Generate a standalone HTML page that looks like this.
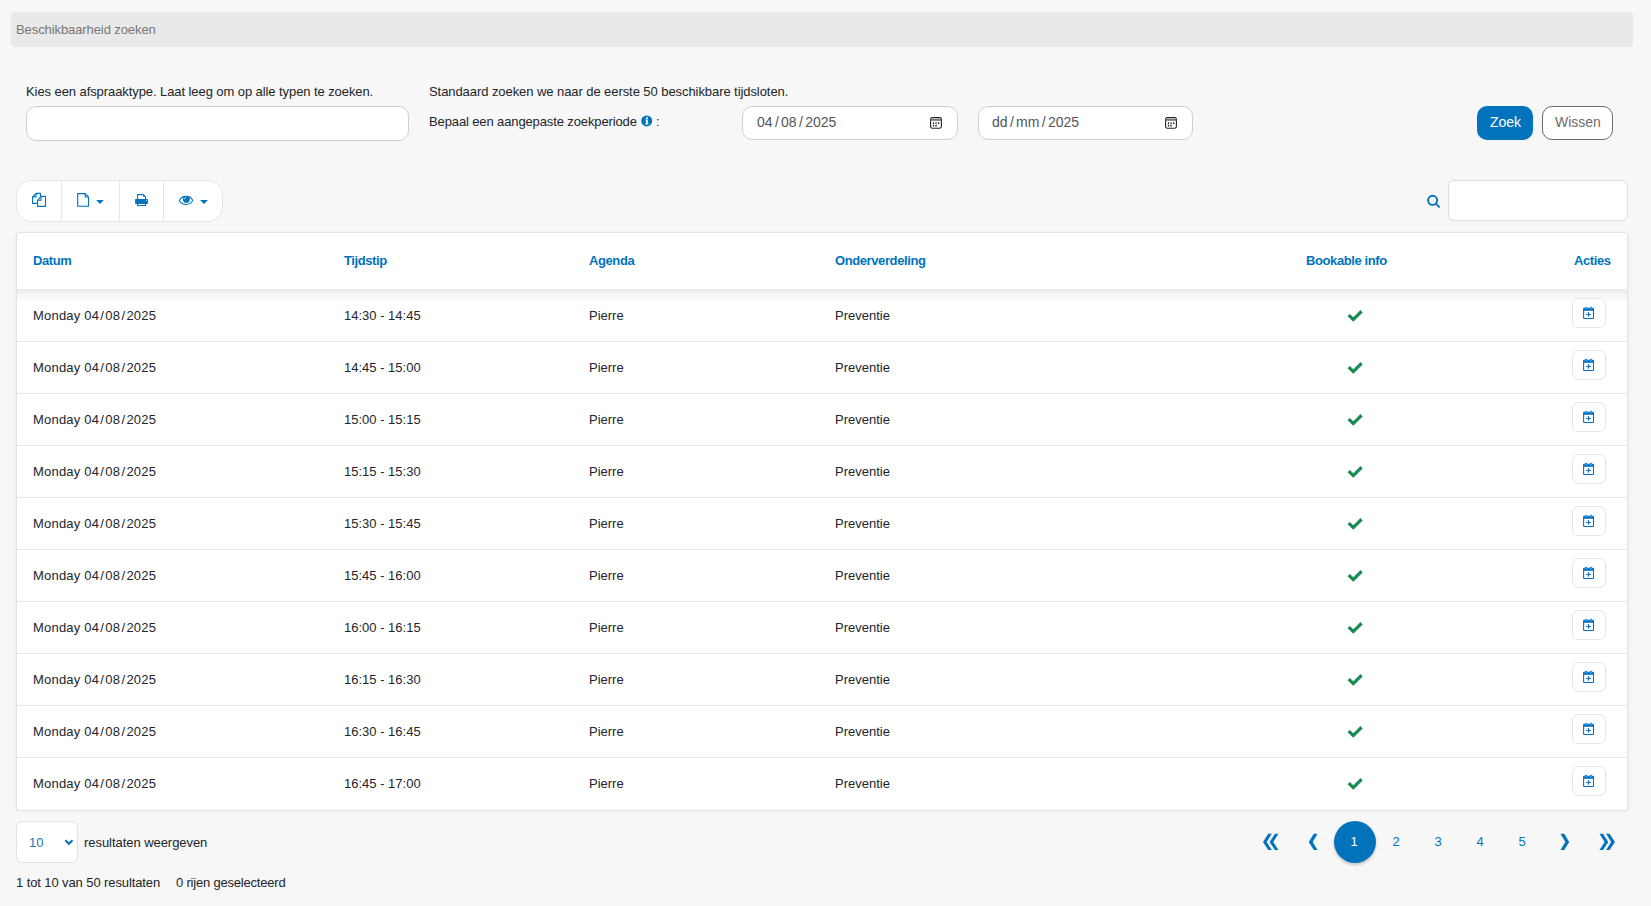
<!DOCTYPE html>
<html><head><meta charset="utf-8">
<style>
*{box-sizing:border-box;margin:0;padding:0}
html,body{width:1651px;height:906px;overflow:hidden;background:#f7f7f7;font-family:"Liberation Sans",sans-serif;font-size:13px;color:#212529}
.a{position:absolute;white-space:nowrap;line-height:16px}
.box{position:absolute;background:#fff}
.th{position:absolute;white-space:nowrap;line-height:16px;font-weight:bold;color:#0173bd;letter-spacing:-0.4px;top:253px}
.hl{position:absolute;left:17px;width:1610px;height:1px;background:#e6e6e6}
.ab{position:absolute;left:1572px;width:34px;height:30px;border:1px solid #e6e6e6;border-radius:6px;background:#fff}
.pg{position:absolute;top:834px;width:42px;text-align:center;line-height:16px;color:#0173bd;font-size:13px}
svg{position:absolute;display:block;overflow:visible}
</style></head><body>

<!-- header bar -->
<div class="box" style="left:11px;top:12px;width:1622px;height:35px;background:#e9e9e9;border-radius:4px"></div>
<div class="a" style="left:16px;top:22px;color:#777;letter-spacing:-0.09px">Beschikbaarheid zoeken</div>

<!-- form -->
<div class="a" style="left:26px;top:84px;letter-spacing:-0.08px">Kies een afspraaktype. Laat leeg om op alle typen te zoeken.</div>
<div class="box" style="left:26px;top:106px;width:383px;height:35px;border:1px solid #cfcfcf;border-radius:10px"></div>

<div class="a" style="left:429px;top:84px;letter-spacing:-0.07px">Standaard zoeken we naar de eerste 50 beschikbare tijdsloten.</div>
<div class="a" style="left:429px;top:114px;letter-spacing:-0.12px">Bepaal een aangepaste zoekperiode</div>
<svg style="left:640.8px;top:115.4px" width="12" height="12" viewBox="0 0 12 12">
<circle cx="5.7" cy="5.9" r="5.5" fill="#0173bd"/>
<circle cx="5.9" cy="2.9" r="1" fill="#fff"/>
<path d="M4.3 4.5 H6.8 V8.5 H7.6 V9.5 H4.2 V8.5 H5 V5.5 H4.3 Z" fill="#fff"/>
</svg>
<div class="a" style="left:656px;top:114px">:</div>

<div class="box" style="left:742px;top:106px;width:216px;height:34px;border:1px solid #cfcfcf;border-radius:10px"></div>
<div class="a" style="left:757px;top:114px;font-size:14px;color:#555">04<span style="margin:0 2.3px">/</span>08<span style="margin:0 2.3px">/</span>2025</div>
<svg style="left:926px;top:111px" width="20" height="24" viewBox="0 0 20 24">
<rect x="4.6" y="6.6" width="10.8" height="10.6" rx="1.6" fill="none" stroke="#222" stroke-width="1.1"/>
<rect x="4.6" y="7.9" width="10.8" height="1.9" fill="#777"/>
<rect x="6.8" y="11.2" width="1.3" height="1.8" rx=".5" fill="#222"/>
<rect x="9.1" y="11.2" width="1.8" height="1.8" rx=".5" fill="#666"/>
<rect x="11.9" y="11.2" width="1.4" height="1.8" rx=".5" fill="#222"/>
<rect x="6.8" y="13.8" width="1.3" height="1.6" rx=".5" fill="#222"/>
<rect x="9.1" y="13.8" width="1.8" height="1.6" rx=".5" fill="#444"/>
</svg>
<div class="box" style="left:978px;top:106px;width:215px;height:34px;border:1px solid #cfcfcf;border-radius:10px"></div>
<div class="a" style="left:992px;top:114px;font-size:14px;color:#555">dd<span style="margin:0 2.3px">/</span>mm<span style="margin:0 2.3px">/</span>2025</div>
<svg style="left:1161px;top:111px" width="20" height="24" viewBox="0 0 20 24">
<rect x="4.6" y="6.6" width="10.8" height="10.6" rx="1.6" fill="none" stroke="#222" stroke-width="1.1"/>
<rect x="4.6" y="7.9" width="10.8" height="1.9" fill="#777"/>
<rect x="6.8" y="11.2" width="1.3" height="1.8" rx=".5" fill="#222"/>
<rect x="9.1" y="11.2" width="1.8" height="1.8" rx=".5" fill="#666"/>
<rect x="11.9" y="11.2" width="1.4" height="1.8" rx=".5" fill="#222"/>
<rect x="6.8" y="13.8" width="1.3" height="1.6" rx=".5" fill="#222"/>
<rect x="9.1" y="13.8" width="1.8" height="1.6" rx=".5" fill="#444"/>
</svg>

<div class="box" style="left:1477px;top:106px;width:56px;height:34px;background:#0173bd;border-radius:10px"></div>
<div class="a" style="left:1490px;top:114px;font-size:14px;color:#fff">Zoek</div>
<div class="box" style="left:1542px;top:106px;width:71px;height:34px;border:1px solid #6c6c6c;border-radius:10px"></div>
<div class="a" style="left:1555px;top:114px;font-size:14px;color:#6c6c6c">Wissen</div>

<!-- toolbar -->
<div class="box" style="left:16px;top:180px;width:207px;height:42px;border:1px solid #e6e6e6;border-radius:15px"></div>
<div class="box" style="left:61px;top:181px;width:1px;height:40px;background:#e6e6e6"></div>
<div class="box" style="left:119px;top:181px;width:1px;height:40px;background:#e6e6e6"></div>
<div class="box" style="left:163px;top:181px;width:1px;height:40px;background:#e6e6e6"></div>
<svg style="left:28px;top:188px" width="24" height="24" viewBox="0 0 24 24" fill="none" stroke="#0173bd" stroke-width="1.1" stroke-linejoin="round">
<path d="M9.6 15.4 H4.6 V8.9 L8.1 5.4 H12.5 V8.4"/>
<path d="M4.6 8.9 H8.1 V5.4"/>
<path d="M9.6 12.3 L13.1 8.4 H17.5 V18.4 H9.6 Z"/>
<path d="M9.6 12.3 H13.1 V8.4"/>
</svg>
<svg style="left:72px;top:188px" width="36" height="24" viewBox="0 0 36 24">
<path d="M5.7 5.6 H13.2 L16.5 8.9 V18.3 H5.7 Z M13.2 5.6 V9 H16.5" fill="none" stroke="#0173bd" stroke-width="1.1" stroke-linejoin="round"/>
<path d="M24.2 12 H31.8 L28 15.9 Z" fill="#0173bd"/>
</svg>
<svg style="left:129px;top:188px" width="24" height="24" viewBox="0 0 24 24">
<path d="M8.6 11.3 V6.6 H14.2 L16.5 8.9 V11.3" fill="none" stroke="#0173bd" stroke-width="1.05"/>
<path d="M14.2 6.6 V8.9 H16.5 Z" fill="#0173bd"/>
<rect x="6.1" y="11" width="12.8" height="4.9" rx=".6" fill="#0173bd"/>
<circle cx="17.4" cy="12.5" r=".55" fill="#bfe3f7"/>
<path d="M8.6 15 V17.5 H16.5 V15" fill="none" stroke="#0173bd" stroke-width="1.05"/>
</svg>
<svg style="left:174px;top:188px" width="36" height="24" viewBox="0 0 36 24">
<path d="M5.4 12.4 C8 7 16.4 7 18.7 12.4 C16.4 17.8 8 17.8 5.4 12.4 Z" fill="none" stroke="#0173bd" stroke-width="1.1"/>
<circle cx="12.4" cy="11.4" r="3.4" fill="#0173bd"/>
<path d="M10.6 11.2 Q10.6 9.7 12.2 9.4" fill="none" stroke="#dff0fb" stroke-width=".8"/>
<path d="M26.1 12 H33.9 L30 15.9 Z" fill="#0173bd"/>
</svg>

<!-- search -->
<svg style="left:1422px;top:190px" width="24" height="24" viewBox="0 0 24 24" fill="none" stroke="#0173bd" stroke-width="1.9" stroke-linecap="round">
<circle cx="10.6" cy="10.35" r="4.55"/>
<path d="M14.2 13.9 L17.1 16.8"/>
</svg>
<div class="box" style="left:1448px;top:180px;width:180px;height:41px;border:1px solid #dedede;border-radius:6px"></div>

<!-- table -->
<div class="box" style="left:16px;top:232px;width:1612px;height:579px;border:1px solid #e2e2e2;border-radius:3px 3px 0 0;box-shadow:-2px 0 4px -1px rgba(0,0,0,0.035),2px 0 4px -1px rgba(0,0,0,0.035)"></div>
<div class="box" style="left:17px;top:290px;width:1610px;height:12px;background:linear-gradient(rgba(0,0,0,0.075),rgba(0,0,0,0))"></div>
<div class="hl" style="top:289px;background:#e8e8e8"></div>
<div class="th" style="left:33px">Datum</div>
<div class="th" style="left:344px">Tijdstip</div>
<div class="th" style="left:589px">Agenda</div>
<div class="th" style="left:835px">Onderverdeling</div>
<div class="th" style="left:1306px">Bookable info</div>
<div class="th" style="left:1574px">Acties</div>

<div class="a" style="left:33px;top:308px;letter-spacing:0.2px">Monday 04<span style="margin:0 1.2px">/</span>08<span style="margin:0 1.2px">/</span>2025</div>
<div class="a" style="left:344px;top:308px">14:30 - 14:45</div>
<div class="a" style="left:589px;top:308px">Pierre</div>
<div class="a" style="left:835px;top:308px">Preventie</div>
<svg style="left:1343px;top:304px" width="24" height="24" viewBox="0 0 24 24">
<path d="M6.9 10.1 L10.3 13.3 L17.5 6.1 L19.7 8.4 L10.3 17.7 L4.5 12.3 Z" fill="#1d8a52"/>
</svg>
<div class="ab" style="top:298px"></div>
<svg style="left:1577px;top:301px" width="24" height="24" viewBox="0 0 24 24">
<path d="M6.6 8.2 Q6.6 7.3 7.5 7.3 H15.6 Q16.5 7.3 16.5 8.2 V17 Q16.5 17.5 16 17.5 H7.1 Q6.6 17.5 6.6 17 Z" fill="none" stroke="#0173bd" stroke-width="1.05"/>
<rect x="6.6" y="7.3" width="9.9" height="2.5" fill="#0173bd"/>
<rect x="7.9" y="5.8" width="2" height="2.9" rx=".9" fill="#0173bd"/>
<rect x="13" y="5.8" width="2" height="2.9" rx=".9" fill="#0173bd"/>
<rect x="8.5" y="6.5" width=".8" height="1.7" fill="#a9d6f2"/>
<rect x="13.6" y="6.5" width=".8" height="1.7" fill="#a9d6f2"/>
<path d="M9.1 13.45 H13.9 M11.5 11 V15.8" stroke="#0173bd" stroke-width="1.05"/>
</svg>
<div class="hl" style="top:341px"></div>
<div class="a" style="left:33px;top:360px;letter-spacing:0.2px">Monday 04<span style="margin:0 1.2px">/</span>08<span style="margin:0 1.2px">/</span>2025</div>
<div class="a" style="left:344px;top:360px">14:45 - 15:00</div>
<div class="a" style="left:589px;top:360px">Pierre</div>
<div class="a" style="left:835px;top:360px">Preventie</div>
<svg style="left:1343px;top:356px" width="24" height="24" viewBox="0 0 24 24">
<path d="M6.9 10.1 L10.3 13.3 L17.5 6.1 L19.7 8.4 L10.3 17.7 L4.5 12.3 Z" fill="#1d8a52"/>
</svg>
<div class="ab" style="top:350px"></div>
<svg style="left:1577px;top:353px" width="24" height="24" viewBox="0 0 24 24">
<path d="M6.6 8.2 Q6.6 7.3 7.5 7.3 H15.6 Q16.5 7.3 16.5 8.2 V17 Q16.5 17.5 16 17.5 H7.1 Q6.6 17.5 6.6 17 Z" fill="none" stroke="#0173bd" stroke-width="1.05"/>
<rect x="6.6" y="7.3" width="9.9" height="2.5" fill="#0173bd"/>
<rect x="7.9" y="5.8" width="2" height="2.9" rx=".9" fill="#0173bd"/>
<rect x="13" y="5.8" width="2" height="2.9" rx=".9" fill="#0173bd"/>
<rect x="8.5" y="6.5" width=".8" height="1.7" fill="#a9d6f2"/>
<rect x="13.6" y="6.5" width=".8" height="1.7" fill="#a9d6f2"/>
<path d="M9.1 13.45 H13.9 M11.5 11 V15.8" stroke="#0173bd" stroke-width="1.05"/>
</svg>
<div class="hl" style="top:393px"></div>
<div class="a" style="left:33px;top:412px;letter-spacing:0.2px">Monday 04<span style="margin:0 1.2px">/</span>08<span style="margin:0 1.2px">/</span>2025</div>
<div class="a" style="left:344px;top:412px">15:00 - 15:15</div>
<div class="a" style="left:589px;top:412px">Pierre</div>
<div class="a" style="left:835px;top:412px">Preventie</div>
<svg style="left:1343px;top:408px" width="24" height="24" viewBox="0 0 24 24">
<path d="M6.9 10.1 L10.3 13.3 L17.5 6.1 L19.7 8.4 L10.3 17.7 L4.5 12.3 Z" fill="#1d8a52"/>
</svg>
<div class="ab" style="top:402px"></div>
<svg style="left:1577px;top:405px" width="24" height="24" viewBox="0 0 24 24">
<path d="M6.6 8.2 Q6.6 7.3 7.5 7.3 H15.6 Q16.5 7.3 16.5 8.2 V17 Q16.5 17.5 16 17.5 H7.1 Q6.6 17.5 6.6 17 Z" fill="none" stroke="#0173bd" stroke-width="1.05"/>
<rect x="6.6" y="7.3" width="9.9" height="2.5" fill="#0173bd"/>
<rect x="7.9" y="5.8" width="2" height="2.9" rx=".9" fill="#0173bd"/>
<rect x="13" y="5.8" width="2" height="2.9" rx=".9" fill="#0173bd"/>
<rect x="8.5" y="6.5" width=".8" height="1.7" fill="#a9d6f2"/>
<rect x="13.6" y="6.5" width=".8" height="1.7" fill="#a9d6f2"/>
<path d="M9.1 13.45 H13.9 M11.5 11 V15.8" stroke="#0173bd" stroke-width="1.05"/>
</svg>
<div class="hl" style="top:445px"></div>
<div class="a" style="left:33px;top:464px;letter-spacing:0.2px">Monday 04<span style="margin:0 1.2px">/</span>08<span style="margin:0 1.2px">/</span>2025</div>
<div class="a" style="left:344px;top:464px">15:15 - 15:30</div>
<div class="a" style="left:589px;top:464px">Pierre</div>
<div class="a" style="left:835px;top:464px">Preventie</div>
<svg style="left:1343px;top:460px" width="24" height="24" viewBox="0 0 24 24">
<path d="M6.9 10.1 L10.3 13.3 L17.5 6.1 L19.7 8.4 L10.3 17.7 L4.5 12.3 Z" fill="#1d8a52"/>
</svg>
<div class="ab" style="top:454px"></div>
<svg style="left:1577px;top:457px" width="24" height="24" viewBox="0 0 24 24">
<path d="M6.6 8.2 Q6.6 7.3 7.5 7.3 H15.6 Q16.5 7.3 16.5 8.2 V17 Q16.5 17.5 16 17.5 H7.1 Q6.6 17.5 6.6 17 Z" fill="none" stroke="#0173bd" stroke-width="1.05"/>
<rect x="6.6" y="7.3" width="9.9" height="2.5" fill="#0173bd"/>
<rect x="7.9" y="5.8" width="2" height="2.9" rx=".9" fill="#0173bd"/>
<rect x="13" y="5.8" width="2" height="2.9" rx=".9" fill="#0173bd"/>
<rect x="8.5" y="6.5" width=".8" height="1.7" fill="#a9d6f2"/>
<rect x="13.6" y="6.5" width=".8" height="1.7" fill="#a9d6f2"/>
<path d="M9.1 13.45 H13.9 M11.5 11 V15.8" stroke="#0173bd" stroke-width="1.05"/>
</svg>
<div class="hl" style="top:497px"></div>
<div class="a" style="left:33px;top:516px;letter-spacing:0.2px">Monday 04<span style="margin:0 1.2px">/</span>08<span style="margin:0 1.2px">/</span>2025</div>
<div class="a" style="left:344px;top:516px">15:30 - 15:45</div>
<div class="a" style="left:589px;top:516px">Pierre</div>
<div class="a" style="left:835px;top:516px">Preventie</div>
<svg style="left:1343px;top:512px" width="24" height="24" viewBox="0 0 24 24">
<path d="M6.9 10.1 L10.3 13.3 L17.5 6.1 L19.7 8.4 L10.3 17.7 L4.5 12.3 Z" fill="#1d8a52"/>
</svg>
<div class="ab" style="top:506px"></div>
<svg style="left:1577px;top:509px" width="24" height="24" viewBox="0 0 24 24">
<path d="M6.6 8.2 Q6.6 7.3 7.5 7.3 H15.6 Q16.5 7.3 16.5 8.2 V17 Q16.5 17.5 16 17.5 H7.1 Q6.6 17.5 6.6 17 Z" fill="none" stroke="#0173bd" stroke-width="1.05"/>
<rect x="6.6" y="7.3" width="9.9" height="2.5" fill="#0173bd"/>
<rect x="7.9" y="5.8" width="2" height="2.9" rx=".9" fill="#0173bd"/>
<rect x="13" y="5.8" width="2" height="2.9" rx=".9" fill="#0173bd"/>
<rect x="8.5" y="6.5" width=".8" height="1.7" fill="#a9d6f2"/>
<rect x="13.6" y="6.5" width=".8" height="1.7" fill="#a9d6f2"/>
<path d="M9.1 13.45 H13.9 M11.5 11 V15.8" stroke="#0173bd" stroke-width="1.05"/>
</svg>
<div class="hl" style="top:549px"></div>
<div class="a" style="left:33px;top:568px;letter-spacing:0.2px">Monday 04<span style="margin:0 1.2px">/</span>08<span style="margin:0 1.2px">/</span>2025</div>
<div class="a" style="left:344px;top:568px">15:45 - 16:00</div>
<div class="a" style="left:589px;top:568px">Pierre</div>
<div class="a" style="left:835px;top:568px">Preventie</div>
<svg style="left:1343px;top:564px" width="24" height="24" viewBox="0 0 24 24">
<path d="M6.9 10.1 L10.3 13.3 L17.5 6.1 L19.7 8.4 L10.3 17.7 L4.5 12.3 Z" fill="#1d8a52"/>
</svg>
<div class="ab" style="top:558px"></div>
<svg style="left:1577px;top:561px" width="24" height="24" viewBox="0 0 24 24">
<path d="M6.6 8.2 Q6.6 7.3 7.5 7.3 H15.6 Q16.5 7.3 16.5 8.2 V17 Q16.5 17.5 16 17.5 H7.1 Q6.6 17.5 6.6 17 Z" fill="none" stroke="#0173bd" stroke-width="1.05"/>
<rect x="6.6" y="7.3" width="9.9" height="2.5" fill="#0173bd"/>
<rect x="7.9" y="5.8" width="2" height="2.9" rx=".9" fill="#0173bd"/>
<rect x="13" y="5.8" width="2" height="2.9" rx=".9" fill="#0173bd"/>
<rect x="8.5" y="6.5" width=".8" height="1.7" fill="#a9d6f2"/>
<rect x="13.6" y="6.5" width=".8" height="1.7" fill="#a9d6f2"/>
<path d="M9.1 13.45 H13.9 M11.5 11 V15.8" stroke="#0173bd" stroke-width="1.05"/>
</svg>
<div class="hl" style="top:601px"></div>
<div class="a" style="left:33px;top:620px;letter-spacing:0.2px">Monday 04<span style="margin:0 1.2px">/</span>08<span style="margin:0 1.2px">/</span>2025</div>
<div class="a" style="left:344px;top:620px">16:00 - 16:15</div>
<div class="a" style="left:589px;top:620px">Pierre</div>
<div class="a" style="left:835px;top:620px">Preventie</div>
<svg style="left:1343px;top:616px" width="24" height="24" viewBox="0 0 24 24">
<path d="M6.9 10.1 L10.3 13.3 L17.5 6.1 L19.7 8.4 L10.3 17.7 L4.5 12.3 Z" fill="#1d8a52"/>
</svg>
<div class="ab" style="top:610px"></div>
<svg style="left:1577px;top:613px" width="24" height="24" viewBox="0 0 24 24">
<path d="M6.6 8.2 Q6.6 7.3 7.5 7.3 H15.6 Q16.5 7.3 16.5 8.2 V17 Q16.5 17.5 16 17.5 H7.1 Q6.6 17.5 6.6 17 Z" fill="none" stroke="#0173bd" stroke-width="1.05"/>
<rect x="6.6" y="7.3" width="9.9" height="2.5" fill="#0173bd"/>
<rect x="7.9" y="5.8" width="2" height="2.9" rx=".9" fill="#0173bd"/>
<rect x="13" y="5.8" width="2" height="2.9" rx=".9" fill="#0173bd"/>
<rect x="8.5" y="6.5" width=".8" height="1.7" fill="#a9d6f2"/>
<rect x="13.6" y="6.5" width=".8" height="1.7" fill="#a9d6f2"/>
<path d="M9.1 13.45 H13.9 M11.5 11 V15.8" stroke="#0173bd" stroke-width="1.05"/>
</svg>
<div class="hl" style="top:653px"></div>
<div class="a" style="left:33px;top:672px;letter-spacing:0.2px">Monday 04<span style="margin:0 1.2px">/</span>08<span style="margin:0 1.2px">/</span>2025</div>
<div class="a" style="left:344px;top:672px">16:15 - 16:30</div>
<div class="a" style="left:589px;top:672px">Pierre</div>
<div class="a" style="left:835px;top:672px">Preventie</div>
<svg style="left:1343px;top:668px" width="24" height="24" viewBox="0 0 24 24">
<path d="M6.9 10.1 L10.3 13.3 L17.5 6.1 L19.7 8.4 L10.3 17.7 L4.5 12.3 Z" fill="#1d8a52"/>
</svg>
<div class="ab" style="top:662px"></div>
<svg style="left:1577px;top:665px" width="24" height="24" viewBox="0 0 24 24">
<path d="M6.6 8.2 Q6.6 7.3 7.5 7.3 H15.6 Q16.5 7.3 16.5 8.2 V17 Q16.5 17.5 16 17.5 H7.1 Q6.6 17.5 6.6 17 Z" fill="none" stroke="#0173bd" stroke-width="1.05"/>
<rect x="6.6" y="7.3" width="9.9" height="2.5" fill="#0173bd"/>
<rect x="7.9" y="5.8" width="2" height="2.9" rx=".9" fill="#0173bd"/>
<rect x="13" y="5.8" width="2" height="2.9" rx=".9" fill="#0173bd"/>
<rect x="8.5" y="6.5" width=".8" height="1.7" fill="#a9d6f2"/>
<rect x="13.6" y="6.5" width=".8" height="1.7" fill="#a9d6f2"/>
<path d="M9.1 13.45 H13.9 M11.5 11 V15.8" stroke="#0173bd" stroke-width="1.05"/>
</svg>
<div class="hl" style="top:705px"></div>
<div class="a" style="left:33px;top:724px;letter-spacing:0.2px">Monday 04<span style="margin:0 1.2px">/</span>08<span style="margin:0 1.2px">/</span>2025</div>
<div class="a" style="left:344px;top:724px">16:30 - 16:45</div>
<div class="a" style="left:589px;top:724px">Pierre</div>
<div class="a" style="left:835px;top:724px">Preventie</div>
<svg style="left:1343px;top:720px" width="24" height="24" viewBox="0 0 24 24">
<path d="M6.9 10.1 L10.3 13.3 L17.5 6.1 L19.7 8.4 L10.3 17.7 L4.5 12.3 Z" fill="#1d8a52"/>
</svg>
<div class="ab" style="top:714px"></div>
<svg style="left:1577px;top:717px" width="24" height="24" viewBox="0 0 24 24">
<path d="M6.6 8.2 Q6.6 7.3 7.5 7.3 H15.6 Q16.5 7.3 16.5 8.2 V17 Q16.5 17.5 16 17.5 H7.1 Q6.6 17.5 6.6 17 Z" fill="none" stroke="#0173bd" stroke-width="1.05"/>
<rect x="6.6" y="7.3" width="9.9" height="2.5" fill="#0173bd"/>
<rect x="7.9" y="5.8" width="2" height="2.9" rx=".9" fill="#0173bd"/>
<rect x="13" y="5.8" width="2" height="2.9" rx=".9" fill="#0173bd"/>
<rect x="8.5" y="6.5" width=".8" height="1.7" fill="#a9d6f2"/>
<rect x="13.6" y="6.5" width=".8" height="1.7" fill="#a9d6f2"/>
<path d="M9.1 13.45 H13.9 M11.5 11 V15.8" stroke="#0173bd" stroke-width="1.05"/>
</svg>
<div class="hl" style="top:757px"></div>
<div class="a" style="left:33px;top:776px;letter-spacing:0.2px">Monday 04<span style="margin:0 1.2px">/</span>08<span style="margin:0 1.2px">/</span>2025</div>
<div class="a" style="left:344px;top:776px">16:45 - 17:00</div>
<div class="a" style="left:589px;top:776px">Pierre</div>
<div class="a" style="left:835px;top:776px">Preventie</div>
<svg style="left:1343px;top:772px" width="24" height="24" viewBox="0 0 24 24">
<path d="M6.9 10.1 L10.3 13.3 L17.5 6.1 L19.7 8.4 L10.3 17.7 L4.5 12.3 Z" fill="#1d8a52"/>
</svg>
<div class="ab" style="top:766px"></div>
<svg style="left:1577px;top:769px" width="24" height="24" viewBox="0 0 24 24">
<path d="M6.6 8.2 Q6.6 7.3 7.5 7.3 H15.6 Q16.5 7.3 16.5 8.2 V17 Q16.5 17.5 16 17.5 H7.1 Q6.6 17.5 6.6 17 Z" fill="none" stroke="#0173bd" stroke-width="1.05"/>
<rect x="6.6" y="7.3" width="9.9" height="2.5" fill="#0173bd"/>
<rect x="7.9" y="5.8" width="2" height="2.9" rx=".9" fill="#0173bd"/>
<rect x="13" y="5.8" width="2" height="2.9" rx=".9" fill="#0173bd"/>
<rect x="8.5" y="6.5" width=".8" height="1.7" fill="#a9d6f2"/>
<rect x="13.6" y="6.5" width=".8" height="1.7" fill="#a9d6f2"/>
<path d="M9.1 13.45 H13.9 M11.5 11 V15.8" stroke="#0173bd" stroke-width="1.05"/>
</svg>

<!-- footer -->
<div class="box" style="left:16px;top:821px;width:62px;height:42px;border:1px solid #e2e2e2;border-radius:6px"></div>
<div class="a" style="left:29px;top:835px;color:#1a78c2">10</div>
<svg style="left:20px;top:830px" width="60" height="26" viewBox="0 0 60 26"><path d="M45.3 10.2 L48.9 13.8 L52.5 10.2" fill="none" stroke="#0173bd" stroke-width="2"/></svg>
<div class="a" style="left:84px;top:835px;letter-spacing:-0.05px">resultaten weergeven</div>
<div class="a" style="left:16px;top:875px;letter-spacing:-0.1px">1 tot 10 van 50 resultaten</div>
<div class="a" style="left:176px;top:875px;letter-spacing:-0.2px">0 rijen geselecteerd</div>

<!-- pagination -->
<svg style="left:1258px;top:828px" width="64" height="28" viewBox="0 0 64 28" fill="#0173bd">
<path d="M10.3 5.8 H13.8 L8.7 14.1 L13.8 21.9 H10.3 L5 14.1 Z"/>
<path d="M16.9 5.8 H20.4 L15.3 14.1 L20.4 21.9 H16.9 L11.6 14.1 Z"/>
<path d="M55.8 5.8 H59.5 L54.7 14.1 L59.5 21.9 H55.8 L50.8 14.1 Z"/>
</svg>
<div class="box" style="left:1334px;top:821px;width:42px;height:42px;border-radius:50%;background:#0173bd;box-shadow:0 2px 3px rgba(0,0,0,0.2)"></div>
<div class="pg" style="left:1333px;color:#fff">1</div>
<div class="pg" style="left:1375px">2</div>
<div class="pg" style="left:1417px">3</div>
<div class="pg" style="left:1459px">4</div>
<div class="pg" style="left:1501px">5</div>
<svg style="left:1550px;top:828px" width="70" height="28" viewBox="0 0 70 28" fill="#0173bd">
<path d="M14.2 5.8 H10.5 L15.3 14.1 L10.5 21.9 H14.2 L19.2 14.1 Z"/>
<path d="M53 5.8 H49.5 L54.6 14.1 L49.5 21.9 H53 L58.3 14.1 Z"/>
<path d="M59.6 5.8 H56.1 L61.2 14.1 L56.1 21.9 H59.6 L64.9 14.1 Z"/>
</svg>

</body></html>
